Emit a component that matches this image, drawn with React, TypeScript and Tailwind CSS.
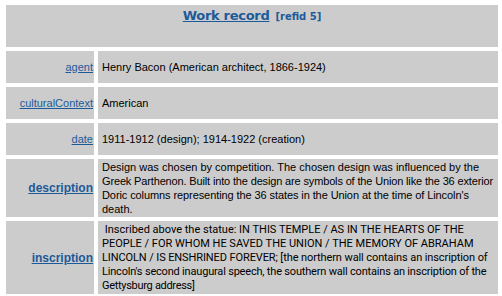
type Line = { text: string; cls?: string };

const rows: { label: string; bold?: boolean; tall?: boolean; font?: string; lines: Line[] }[] = [
  { label: "agent", lines: [{ text: "Henry Bacon (American architect, 1866-1924)" }] },
  { label: "culturalContext", lines: [{ text: "American" }] },
  { label: "date", lines: [{ text: "1911-1912 (design); 1914-1922 (creation)" }] },
  {
    label: "description",
    bold: true,
    tall: true,
    lines: [
      { text: "Design was chosen by competition. The chosen design was influenced by the" },
      {
        text: "Greek Parthenon. Built into the design are symbols of the Union like the 36 exterior",
        cls: "tracking-[-0.15px]",
      },
      {
        text: "Doric columns representing the 36 states in the Union at the time of Lincoln's",
        cls: "tracking-[-0.09px]",
      },
      { text: "death." },
    ],
  },
  {
    label: "inscription",
    bold: true,
    tall: true,
    font: "font-['Roboto',Tahoma,sans-serif] pt-[2px]",
    lines: [
      { text: "\u00a0Inscribed above the statue: IN THIS TEMPLE / AS IN THE HEARTS OF THE" },
      { text: "PEOPLE / FOR WHOM HE SAVED THE UNION / THE MEMORY OF ABRAHAM" },
      {
        text: "LINCOLN / IS ENSHRINED FOREVER; [the northern wall contains an inscription of",
        cls: "tracking-[-0.1px]",
      },
      {
        text: "Lincoln's second inaugural speech, the southern wall contains an inscription of the",
        cls: "tracking-[-0.19px]",
      },
      { text: "Gettysburg address]", cls: "tracking-[-0.3px]" },
    ],
  },
];

export default function App() {
  return (
    <div className="w-[502px] h-[296px] overflow-hidden bg-white font-['Liberation_Sans',Arial,sans-serif] text-[11px] leading-[14px] text-black">
      <table className="table-fixed border-separate border-spacing-[4px] w-[500px] ml-[2px] mt-[1px]">
        <colgroup>
          <col className="w-[88px]" />
          <col className="w-[400px]" />
        </colgroup>
        <tbody>
          {/* record title */}
          <tr>
            <td colSpan={2} className="h-[42px] p-0 pt-[3px] align-top text-center bg-[#cccccc]">
              <a
                href="#"
                className="font-['DejaVu_Sans',Verdana,sans-serif] font-bold text-[13px] leading-[16px] text-[#1d5a9a] underline tracking-[-0.3px]"
              >
                Work record
              </a>
              <span className="ml-[6px] font-['DejaVu_Sans',Verdana,sans-serif] font-bold text-[10px] leading-[16px] text-[#1d5a9a]">
                [refid 5]
              </span>
            </td>
          </tr>

          {rows.map((r) => (
            <tr key={r.label}>
              <td
                className={
                  "p-0 pr-[1px] text-right align-middle bg-[#cccccc] " + (r.tall ? "" : "h-[32px]")
                }
              >
                <a
                  href="#"
                  className={
                    r.bold
                      ? "font-bold text-[12px] text-[#1d5a9a] underline"
                      : "text-[11px] text-[#1d5a9a] underline"
                  }
                >
                  {r.label}
                </a>
              </td>
              <td
                className={
                  "py-[1px] pl-[4px] pr-0 align-middle bg-[#cccccc] whitespace-nowrap overflow-hidden " +
                  (r.font ?? "")
                }
              >
                {r.lines.map((l, i) => (
                  <div key={i} className={l.cls}>
                    {l.text}
                  </div>
                ))}
              </td>
            </tr>
          ))}
        </tbody>
      </table>
    </div>
  );
}
